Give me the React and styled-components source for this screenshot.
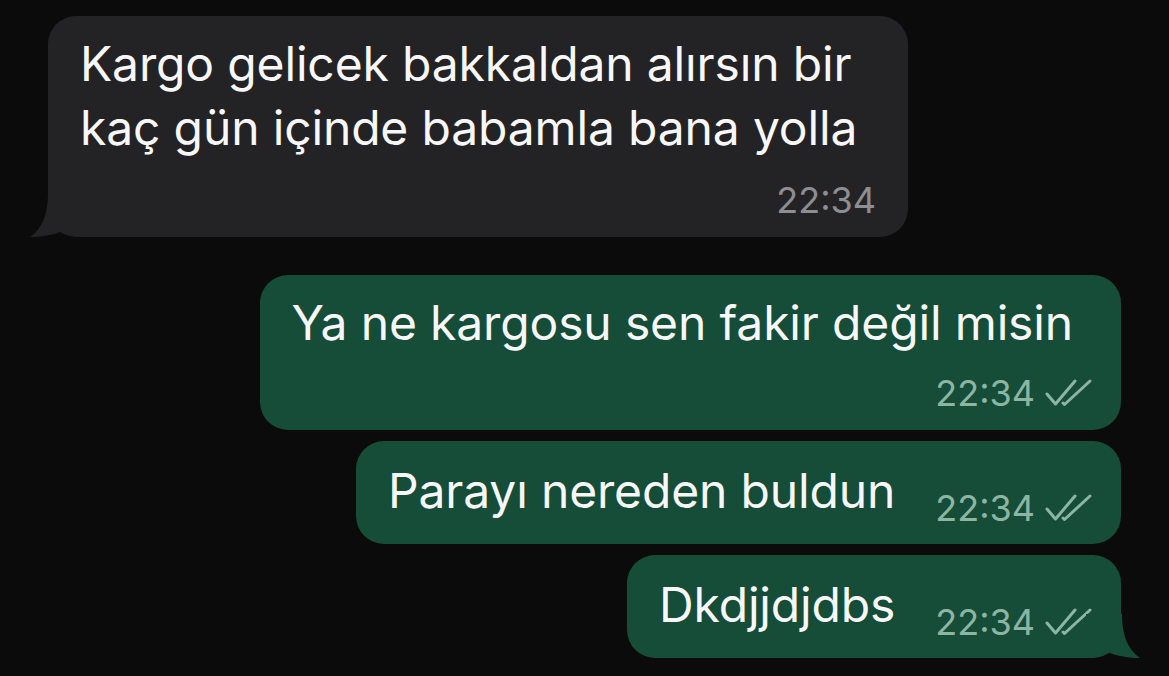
import React from 'react';
import styled, { createGlobalStyle } from 'styled-components';

const GlobalStyle = createGlobalStyle`
  html, body {
    margin: 0;
    padding: 0;
    background: #0b0b0b;
  }
  body {
    font-family: Inter, "Noto Sans", "Liberation Sans", sans-serif;
    -webkit-font-smoothing: antialiased;
  }
`;

const messages = [
  {
    id: 1,
    out: false,
    text: 'Kargo gelicek bakkaldan alırsın bir kaç gün içinde babamla bana yolla',
    time: '22:34',
    layout: 'stack',
    tail: true,
  },
  {
    id: 2,
    out: true,
    text: 'Ya ne kargosu sen fakir değil misin',
    time: '22:34',
    layout: 'stack',
  },
  { id: 3, out: true, text: 'Parayı nereden buldun', time: '22:34', layout: 'inline' },
  { id: 4, out: true, text: 'Dkdjjdjdbs', time: '22:34', layout: 'inline', tail: true },
];

function DoubleCheck() {
  return (
    <CheckSvg viewBox="0 0 47 28" fill="none">
      <path
        d="M2 15 L10.5 25 L30 2"
        stroke="currentColor"
        strokeWidth="3"
        strokeLinecap="round"
        strokeLinejoin="round"
      />
      <path
        d="M18 24 L19.5 25.5 L45 2"
        stroke="currentColor"
        strokeWidth="3"
        strokeLinecap="round"
        strokeLinejoin="round"
      />
    </CheckSvg>
  );
}

function Tail({ out }) {
  return (
    <TailSvg out={out} viewBox="0 0 54 44">
      <path d="M18 0 C18 22, 12 36, 0 44 C 10 44, 24 42, 32 38 C 36 41, 42 44, 54 44 L54 0 Z" />
    </TailSvg>
  );
}

function Message({ msg }) {
  const meta = (
    <Meta out={msg.out} layout={msg.layout}>
      <span>{msg.time}</span>
      {msg.out && <DoubleCheck />}
    </Meta>
  );
  return (
    <Row out={msg.out}>
      <Bubble out={msg.out} layout={msg.layout}>
        {msg.tail && <Tail out={msg.out} />}
        {msg.layout === 'stack' ? (
          <>
            <Text>{msg.text}</Text>
            <MetaRow out={msg.out}>{meta}</MetaRow>
          </>
        ) : (
          <InlineWrap>
            <Text>{msg.text}</Text>
            {meta}
          </InlineWrap>
        )}
      </Bubble>
    </Row>
  );
}

export default function App() {
  return (
    <>
      <GlobalStyle />
      <Chat>
        {messages.map((m) => (
          <Message key={m.id} msg={m} />
        ))}
      </Chat>
    </>
  );
}

const Chat = styled.div`
  width: 1169px;
  height: 676px;
  box-sizing: border-box;
  padding: 16px 48px 0 48px;
  display: flex;
  flex-direction: column;
  overflow: hidden;
`;

const Row = styled.div`
  display: flex;
  justify-content: ${({ out }) => (out ? 'flex-end' : 'flex-start')};
  margin-bottom: 11px;
  &:first-child {
    margin-bottom: 38px;
  }
`;

const Bubble = styled.div`
  position: relative;
  box-sizing: border-box;
  background: ${({ out }) => (out ? '#154d38' : '#232325')};
  border-radius: 28px;
  padding: ${({ layout }) =>
    layout === 'stack' ? '16px 29px 17px 32px' : '18px 29px 21px 32px'};
  max-width: ${({ out }) => (out ? '920px' : '860px')};
`;

const Text = styled.div`
  font-size: 48px;
  line-height: 64px;
  letter-spacing: -0.15px;
  color: #f7f7f7;
  padding-right: 19px;
`;

const InlineWrap = styled.div`
  display: flex;
  align-items: flex-end;
  gap: 21px;
`;

const MetaRow = styled.div`
  display: flex;
  justify-content: flex-end;
  margin-top: ${({ out }) => (out ? '18px' : '20px')};
`;

const Meta = styled.div`
  display: flex;
  align-items: center;
  gap: 10px;
  font-size: 36px;
  line-height: 40px;
  color: ${({ out }) => (out ? '#8db5a3' : '#8d8d92')};
  white-space: nowrap;
  margin-bottom: ${({ layout }) => (layout === 'inline' ? '-5px' : '0')};
  margin-right: ${({ out }) => (out ? '0' : '3px')};
`;

const CheckSvg = styled.svg`
  width: 47px;
  height: 28px;
  display: block;
`;

const TailSvg = styled.svg`
  position: absolute;
  bottom: 0;
  width: 54px;
  height: 44px;
  fill: ${({ out }) => (out ? '#154d38' : '#232325')};
  ${({ out }) => (out ? 'right: -19px; transform: scaleX(-1);' : 'left: -18px;')}
`;
